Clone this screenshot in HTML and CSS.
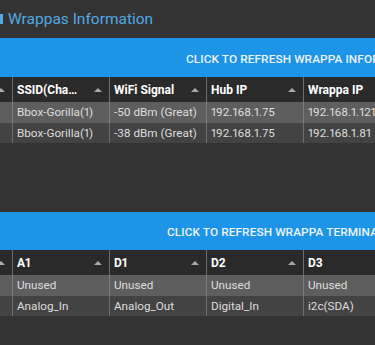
FILE: index.html
```html
<!DOCTYPE html>
<html lang="en">
<head>
  <meta charset="UTF-8">
  <meta name="viewport" content="width=device-width, initial-scale=1.0">
  <title>Wrappas Information</title>
  <link rel="stylesheet" href="styles.css">
</head>
<body>

  <div class="page-title">
    <span class="title-icon"></span>
    <span>Wrappas Information</span>
  </div>

  <!-- Wrappa info -->
  <button class="refresh-btn refresh-info">Click to refresh Wrappa information</button>
  <div class="grid-wrap grid-info">
    <table class="grid">
      <thead>
        <tr>
          <th><div class="th-inner"><span class="th-label">Name</span><span class="sort"></span></div></th>
          <th><div class="th-inner"><span class="th-label">SSID(Channel)</span><span class="sort"></span></div></th>
          <th><div class="th-inner"><span class="th-label">WiFi Signal</span><span class="sort"></span></div></th>
          <th><div class="th-inner"><span class="th-label">Hub IP</span><span class="sort"></span></div></th>
          <th><div class="th-inner"><span class="th-label">Wrappa IP</span><span class="sort"></span></div></th>
        </tr>
      </thead>
      <tbody>
        <tr class="row-selected">
          <td>Wrappa 1</td>
          <td>Bbox-Gorilla(1)</td>
          <td>-50 dBm (Great)</td>
          <td>192.168.1.75</td>
          <td>192.168.1.121</td>
        </tr>
        <tr>
          <td>Wrappa 2</td>
          <td>Bbox-Gorilla(1)</td>
          <td>-38 dBm (Great)</td>
          <td>192.168.1.75</td>
          <td>192.168.1.81</td>
        </tr>
      </tbody>
    </table>
  </div>

  <!-- Terminals -->
  <button class="refresh-btn refresh-terminals">Click to refresh Wrappa terminals</button>
  <div class="grid-wrap grid-terminals">
    <table class="grid">
      <thead>
        <tr>
          <th><div class="th-inner"><span class="th-label">Wrappa</span><span class="sort"></span></div></th>
          <th><div class="th-inner"><span class="th-label">A1</span><span class="sort"></span></div></th>
          <th><div class="th-inner"><span class="th-label">D1</span><span class="sort"></span></div></th>
          <th><div class="th-inner"><span class="th-label">D2</span><span class="sort"></span></div></th>
          <th><div class="th-inner"><span class="th-label">D3</span><span class="sort"></span></div></th>
        </tr>
      </thead>
      <tbody>
        <tr class="row-selected">
          <td>Wrappa 1</td>
          <td>Unused</td>
          <td>Unused</td>
          <td>Unused</td>
          <td>Unused</td>
        </tr>
        <tr>
          <td>Wrappa 2</td>
          <td>Analog_In</td>
          <td>Analog_Out</td>
          <td>Digital_In</td>
          <td>i2c(SDA)</td>
        </tr>
      </tbody>
    </table>
  </div>

</body>
</html>
```

FILE: styles.css
```css
body {
  font-family: Roboto, "Liberation Sans", sans-serif;
  background-color: #333333;
  color: #e0e0e0;
  margin: 0;
  padding: 0;
  overflow: hidden;
}
.page-title {
  height: 38px;
  display: flex;
  align-items: center;
  font-size: 15.5px;
  color: #52a9e3;
}
.title-icon {
  width: 3px;
  height: 10px;
  background: #52a9e3;
  margin-right: 5px;
}
.refresh-btn {
  display: block;
  width: 100%;
  height: 39px;
  margin: 0;
  padding: 2px 0 0 186px;
  border: none;
  background-color: #1d94e6;
  color: #eef4fb;
  font-family: Roboto, "Liberation Sans", sans-serif;
  font-size: 11.8px;
  font-weight: 500;
  letter-spacing: 0.1px;
  text-transform: uppercase;
  text-align: left;
  white-space: nowrap;
  overflow: hidden;
  cursor: pointer;
}
.refresh-terminals {
  height: 38px;
  padding-left: 167px;
}
.grid-wrap {
  overflow: hidden;
}
.grid-info {
  height: 135px;
}
.grid-terminals {
  height: 95px;
}
.grid {
  margin-left: -84px;
  border-collapse: separate;
  border-spacing: 0;
  table-layout: fixed;
  width: 485px;
  font-size: 11.7px;
  font-variant-numeric: proportional-nums;
}
.grid th,
.grid td {
  width: 97px;
  box-sizing: border-box;
  border-right: 1px solid #6e6e6e;
  padding: 0 0 0 4px;
  white-space: nowrap;
  overflow: hidden;
  text-align: left;
}
.grid th {
  height: 25px;
  background: #2a2a2a;
  color: #ffffff;
  font-size: 12px;
  font-weight: bold;
}
.th-inner {
  display: flex;
  align-items: center;
  padding-right: 7px;
}
.th-label {
  flex: 1;
  overflow: hidden;
  text-overflow: ellipsis;
}
.sort {
  width: 0;
  height: 0;
  margin-left: 12px;
  border-left: 4px solid transparent;
  border-right: 4px solid transparent;
  border-bottom: 4px solid #a9a9a9;
}
.grid td {
  height: 20.5px;
  background: #434343;
  color: #dedede;
}
.row-selected td {
  background: #5e5e5e;
  border-right-color: #7c7c7c;
}
```
